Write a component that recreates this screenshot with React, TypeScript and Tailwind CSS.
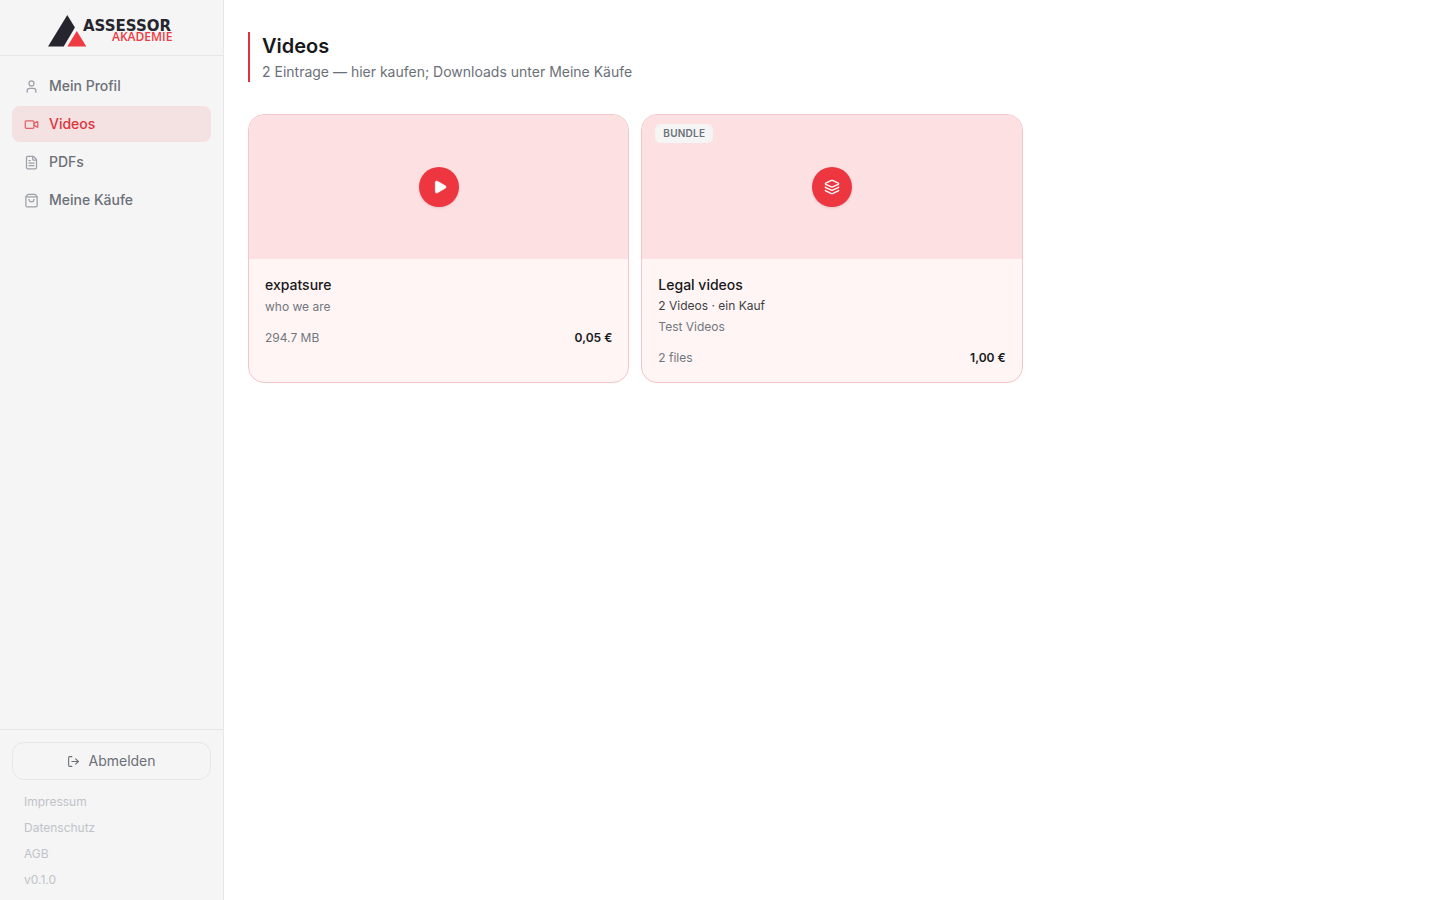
import type { ReactNode } from "react";
import { FileText, Layers, LogOut, Play, ShoppingBag, User, Video } from "lucide-react";
import type { LucideIcon } from "lucide-react";
import clsx from "clsx";


type NavItem = {
    label: string
    icon: LucideIcon
    active?: boolean
}

type VideoItem = {
    title: string
    meta?: string
    description: string
    size: string
    price: string
    bundle?: boolean
}


export default function App(){
    return(
        <div className="flex min-h-screen bg-white font-['Inter','Liberation_Sans',sans-serif] text-[#18181b]">
            <Sidebar />

            <main className="flex-1 px-6 py-8">
                <PageHeader title="Videos">
                    2 Eintrage — hier kaufen; Downloads unter Meine Käufe
                </PageHeader>

                <div className="mt-8 grid grid-cols-3 gap-3">
                    {videos.map((video) => (
                        <VideoCard key={video.title} video={video} />
                    ))}
                </div>
            </main>
        </div>
    )
}


function Sidebar(){
    return(
        <aside className="flex w-56 shrink-0 flex-col border-r border-[#e6e7e9] bg-[#f5f5f5]">
            <div className="flex h-14 items-end justify-center border-b border-[#e6e7e9] pb-2">
                <a href="#" aria-label="Assessor Akademie">
                    <Logo />
                </a>
            </div>

            <nav className="flex flex-1 flex-col gap-0.5 p-3">
                {navItems.map(({ label, icon: Icon, active }) => (
                    <a
                        key={label}
                        href="#"
                        className={clsx(
                            "flex h-9 items-center gap-2.5 rounded-lg px-3 text-sm font-medium",
                            active ? "bg-[#f4e1e1] text-[#dc343d]" : "text-[#6b7078]"
                        )}
                    >
                        <Icon size={15} strokeWidth={2} className={active ? "text-[#e4606a]" : "text-[#9ca0aa]"} />
                        {label}
                    </a>
                ))}
            </nav>

            <div className="border-t border-[#e6e7e9] px-3 pt-3 pb-2">
                <button
                    type="button"
                    className="flex w-full items-center justify-center gap-2 rounded-xl border border-[#e6e7e9] py-2 text-sm text-[#6b7078]"
                >
                    <LogOut size={13} strokeWidth={2} />
                    Abmelden
                </button>

                <div className="mt-2.5 flex flex-col gap-0.5 px-3 text-xs text-[#c0c3ca]">
                    {legalLinks.map((link) => (
                        <a key={link} href="#" className="py-1">{link}</a>
                    ))}
                    <span className="py-1">v0.1.0</span>
                </div>
            </div>
        </aside>
    )
}


function PageHeader({ title, children }: { title: string, children: ReactNode }){
    return(
        <header className="border-l-2 border-[#dc343d] pl-3">
            <h1 className="text-xl font-semibold">{title}</h1>
            <p className="mt-0.5 text-sm text-[#6b7078]">{children}</p>
        </header>
    )
}


function VideoCard({ video }: { video: VideoItem }){
    return(
        <article className="relative flex flex-col overflow-hidden rounded-2xl border border-[#f3c6ca] bg-[#fef5f4]">
            <div className="flex h-36 items-center justify-center bg-[#fde1e2]">
                <button
                    type="button"
                    aria-label={video.title}
                    className="flex size-10 items-center justify-center rounded-full bg-[#ee3640] text-white shadow-sm"
                >
                    {video.bundle
                        ? <Layers size={16} strokeWidth={2} />
                        : <Play size={16} strokeWidth={1} fill="currentColor" className="ml-0.5" />
                    }
                </button>
            </div>

            {video.bundle && (
                <span className="absolute top-[9px] left-[13px] rounded-md bg-[#f5f5f5] px-2 py-0.5 text-[10px] leading-[15px] font-semibold tracking-wide text-[#6b7078]">
                    BUNDLE
                </span>
            )}

            <div className="p-4">
                <h2 className="text-sm leading-[19px] font-medium">{video.title}</h2>
                {video.meta && <p className="mt-1 text-xs text-[#3f3f46]">{video.meta}</p>}
                <p className="mt-[5px] text-xs text-[#73767e]">{video.description}</p>

                <div className="mt-[15px] flex items-center justify-between text-xs">
                    <span className="text-[#73767e]">{video.size}</span>
                    <span className="font-semibold">{video.price}</span>
                </div>
            </div>
        </article>
    )
}


function Logo(){
    return(
        <svg width="127" height="32" viewBox="0 0 127 32" className="block">
            <path d="M0 31.500 19.300 0 26.900 12.500 15.700 31.500Z" fill="#26252d" />
            <path d="M28.800 16 38.300 31.500H19.300Z" fill="#ee3a40" />
            <text x="35" y="16" fontSize="15" fontWeight="700" fill="#26252d" className="font-['DejaVu_Sans',sans-serif]">ASSESSOR</text>
            <text x="64" y="26" fontSize="12" fontWeight="600" fill="#ee3a40" className="font-['Open_Sans',sans-serif]">AKADEMIE</text>
        </svg>
    )
}


const navItems: NavItem[] = [
    { label: "Mein Profil",  icon: User },
    { label: "Videos",       icon: Video, active: true },
    { label: "PDFs",         icon: FileText },
    { label: "Meine Käufe",  icon: ShoppingBag },
];

const legalLinks = ["Impressum", "Datenschutz", "AGB"];

const videos: VideoItem[] = [
    { title: "expatsure", description: "who we are", size: "294.7 MB", price: "0,05 €" },
    { title: "Legal videos", meta: "2 Videos · ein Kauf", description: "Test Videos", size: "2 files", price: "1,00 €", bundle: true },
];
